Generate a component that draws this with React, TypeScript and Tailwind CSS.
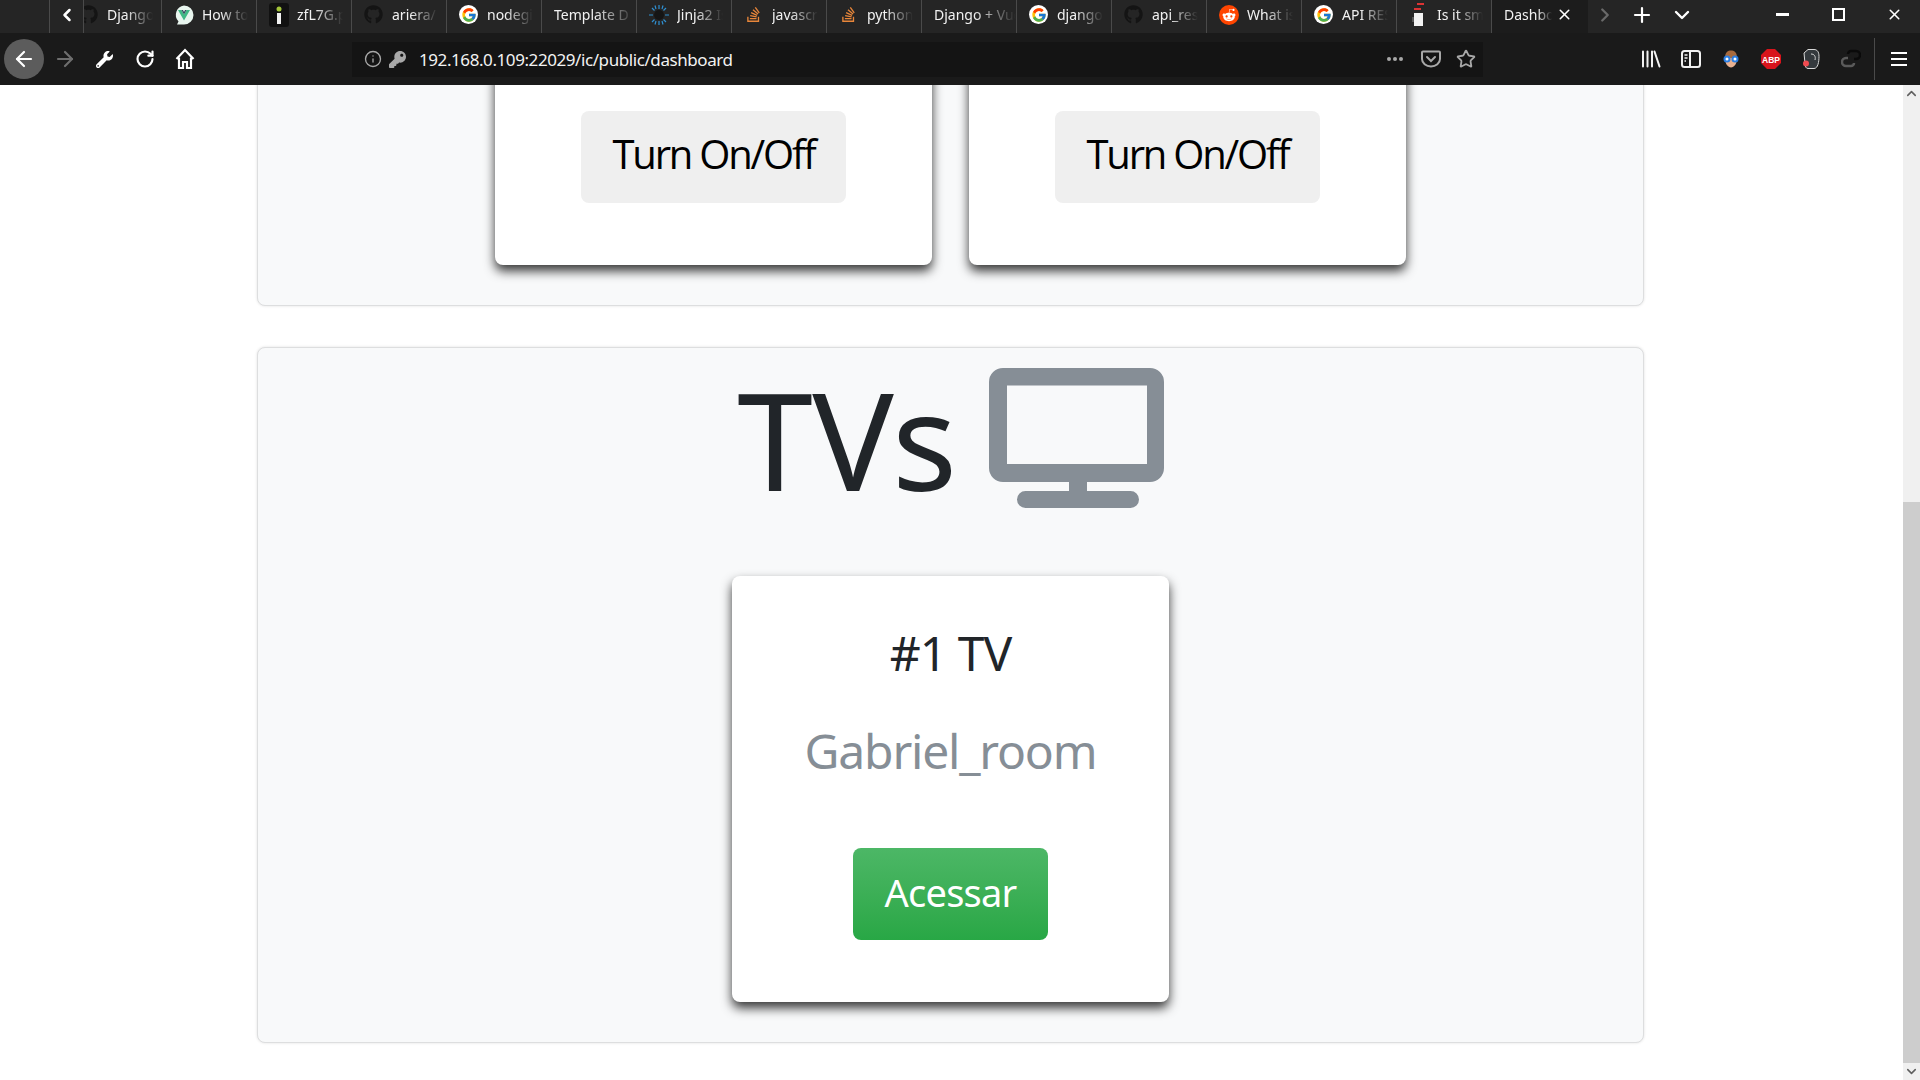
import { ArrowLeft, ArrowRight, ChevronDown, ChevronLeft, ChevronRight, ChevronUp, Info, Plus, RotateCw, Star, X } from 'lucide-react';
import { FaGithub, FaKey, FaRedditAlien, FaStackOverflow, FaWrench } from 'react-icons/fa';
import { FcGoogle } from 'react-icons/fc';

const GoogleIcon = () => (
  <span className="flex h-[19px] w-[19px] items-center justify-center rounded-full bg-white">
    <FcGoogle size={16} />
  </span>
);

const GithubIcon = () => <FaGithub size={19} className="text-[#141414]" />;

const StackIcon = () => <FaStackOverflow size={17} className="text-[#e8863a]" />;

const VueIcon = () => (
  <svg width="20" height="20" viewBox="0 0 20 20">
    <path d="M10 0.5a9.5 9.5 0 0 1 0 19H3l1.500-3A9.500 9.500 0 0 1 10 0.5z" fill="#e8f5ee" />
    <path d="M4 5h3.500L10 9.500 12.500 5H16l-6 10.500z" fill="#3fb984" />
    <path d="M7.500 5L10 9.500 12.500 5h-1.500L10 7 9 5z" fill="#34495e" />
  </svg>
);

const InfoFavicon = () => (
  <svg width="20" height="24" viewBox="0 0 20 24">
    <rect width="20" height="24" rx="3" fill="#111111" />
    <circle cx="10" cy="6" r="2.500" fill="#a4c639" />
    <rect x="8" y="10" width="4" height="11" fill="#f2f2f2" />
  </svg>
);

const JinjaIcon = () => (
  <svg width="22" height="22" viewBox="0 0 22 22">
    <g stroke="#2f8fd0" strokeWidth="1.200">
      <path d="M11 1v4M11 17v4M1 11h4M17 11h4M4 4l2.500 2.500M15.500 15.500L18 18M18 4l-2.500 2.500M6.500 15.500L4 18M7 1.500l1 3.500M15 1.500l-1 3.500M7 20.500l1-3.500M15 20.500l-1-3.500" />
    </g>
    <circle cx="11" cy="11" r="5" fill="#151515" />
  </svg>
);

const RedditIcon = () => (
  <span className="flex h-[20px] w-[20px] items-center justify-center rounded-full bg-[#ff4500]">
    <FaRedditAlien size={14} className="text-white" />
  </span>
);

const CoffeeIcon = () => (
  <svg width="14" height="24" viewBox="0 0 14 24">
    <rect x="5" y="0" width="7" height="2" fill="#d33" />
    <rect x="2" y="5" width="7" height="2" fill="#d33" />
    <rect x="2" y="10" width="9" height="13" fill="#f2f2f2" />
    <rect x="0" y="14" width="2" height="5" fill="#555" />
  </svg>
);

const tabs = [
  { label: 'Django', icon: <GithubIcon /> },
  { label: 'How to', icon: <VueIcon /> },
  { label: 'zfL7G.png', icon: <InfoFavicon /> },
  { label: 'ariera/', icon: <GithubIcon /> },
  { label: 'nodegit', icon: <GoogleIcon /> },
  { label: 'Template D', icon: null },
  { label: 'Jinja2 Is', icon: <JinjaIcon /> },
  { label: 'javascript', icon: <StackIcon /> },
  { label: 'python', icon: <StackIcon /> },
  { label: 'Django + Vue', icon: null },
  { label: 'django', icon: <GoogleIcon /> },
  { label: 'api_rest', icon: <GithubIcon /> },
  { label: 'What is', icon: <RedditIcon /> },
  { label: 'API REST', icon: <GoogleIcon /> },
  { label: 'Is it smart', icon: <CoffeeIcon /> },
];

const TabBar = () => (
  <div className="flex h-[33px] items-center bg-[#252525] font-['Noto_Sans',sans-serif] text-[14px] text-[#f2f2f2]">
    <div className="w-[49px] h-full" />
    <div className="relative z-10 flex h-full w-[35px] items-center justify-center border-x border-[#4a4a4a] bg-[#252525] pb-[4px]">
      <ChevronLeft size={20} strokeWidth={3} className="text-white" />
    </div>
    <div className="flex h-full -ml-[17px]">
      {tabs.map((tab) => (
        <div
          key={tab.label}
          className="flex h-full w-[95px] items-center overflow-hidden border-r border-[#4a4a4a] pb-[4px]"
        >
          {tab.icon ? (
            <>
              <span className="flex w-[40px] shrink-0 justify-center pl-[3px]">{tab.icon}</span>
              <span className="w-[46px] whitespace-nowrap overflow-hidden [mask-image:linear-gradient(to_right,black_40%,transparent)]">
                {tab.label}
              </span>
            </>
          ) : (
            <span className="pl-[12px] pr-[10px] whitespace-nowrap overflow-hidden [mask-image:linear-gradient(to_right,black_55%,transparent)]">
              {tab.label}
            </span>
          )}
        </div>
      ))}
      <div className="flex h-full w-[96px] items-center bg-[#1c1c1c] pl-[12px] pb-[4px]">
        <span className="w-[48px] whitespace-nowrap overflow-hidden [mask-image:linear-gradient(to_right,black_70%,transparent)]">
          Dashboard
        </span>
        <X size={17} strokeWidth={2.2} className="ml-[4px] text-white" />
      </div>
    </div>
    <div className="flex items-center pb-[4px]">
      <ChevronRight size={22} strokeWidth={2.5} className="ml-[6px] text-[#6a6a6a]" />
      <Plus size={24} strokeWidth={2.2} className="ml-[14px] text-white" />
      <ChevronDown size={24} strokeWidth={2.4} className="ml-[16px] text-white" />
    </div>
    <div className="ml-auto flex items-center pb-[4px]">
      <div className="h-[3px] w-[13px] bg-white" />
      <div className="ml-[43px] h-[13px] w-[13px] border-[2.5px] border-white" />
      <X size={17} strokeWidth={2.2} className="ml-[41px] mr-[17px] text-white" />
    </div>
  </div>
);

const PocketIcon = () => (
  <svg width="20" height="18" viewBox="0 0 20 18" fill="none" stroke="#a8a8a8" strokeWidth="2">
    <path d="M2 1.500h16a1 1 0 0 1 1 1V9a9 7.500 0 0 1-18 0V2.500a1 1 0 0 1 1-1z" />
    <path d="M6 7l4 4 4-4" strokeLinecap="round" />
  </svg>
);

const LibraryIcon = () => (
  <svg width="20" height="18" viewBox="0 0 20 18" stroke="#f2f2f2" strokeWidth="2" strokeLinecap="round">
    <path d="M2 1.500v15M6.500 1.500v15M11 1.500v15M13.500 1.500l5 15" />
  </svg>
);

const SidebarIcon = () => (
  <svg width="20" height="18" viewBox="0 0 20 18" fill="none" stroke="#f2f2f2" strokeWidth="2">
    <rect x="1" y="1" width="18" height="16" rx="2.500" />
    <path d="M9 1v16" />
    <path d="M3.500 5h3M3.500 8h3M3.500 11h1.500" strokeWidth="1.300" />
  </svg>
);

const MascotIcon = () => (
  <svg width="18" height="18" viewBox="0 0 18 18">
    <path d="M3 8C3 2 6 0.500 9 0.500S15 2 15 8z" fill="#a86a3d" />
    <path d="M3 8c0 6 3 9.500 6 9.500S15 14 15 8z" fill="#e8b090" />
    <circle cx="5" cy="9" r="3.500" fill="#2a7de1" />
    <circle cx="13" cy="9" r="3.500" fill="#2a7de1" />
    <circle cx="5" cy="9" r="1.500" fill="#ffffff" />
    <circle cx="13" cy="9" r="1.500" fill="#ffffff" />
  </svg>
);

const AbpIcon = () => (
  <svg width="20" height="20" viewBox="0 0 20 20">
    <path d="M6 0h8l6 6v8l-6 6H6l-6-6V6z" fill="#d8141c" />
    <text x="10" y="13.500" textAnchor="middle" fontSize="8.500" fontWeight="700" fill="#ffffff" fontFamily="Liberation Sans, sans-serif">
      ABP
    </text>
  </svg>
);

const EvernoteIcon = () => (
  <svg width="18" height="20" viewBox="0 0 18 20">
    <path d="M2 4l4-3.500h6c3 0 5 2 5 7s-1 12-5 12H6c-2 0-3-2-3-5z" fill="#34393d" stroke="#d8d8d8" strokeWidth="1" />
    <path d="M9 5c3 0 5 2 4 6" fill="none" stroke="#d8d8d8" strokeWidth="1" />
    <circle cx="4" cy="14.500" r="3" fill="#ef4b50" />
  </svg>
);

const SwirlIcon = () => (
  <svg width="20" height="20" viewBox="0 0 20 20" fill="none" strokeWidth="2.500">
    <path d="M7 6H5a4 4 0 0 0 0 8h5a3 3 0 0 0 3-3" stroke="#5a5a5a" transform="translate(0 3)" />
    <path d="M7 9a3 3 0 0 1 3-3h5a4 4 0 0 1 0 8h-2" stroke="#0a0a0a" transform="translate(0 -4)" />
  </svg>
);

const NavBar = () => (
  <div className="flex h-[52px] items-center bg-[#1a1a1a]">
    <div className="ml-[4px] flex h-[40px] w-[40px] items-center justify-center rounded-full bg-[#5c5c5c]">
      <ArrowLeft size={24} strokeWidth={2.2} className="text-white" />
    </div>
    <ArrowRight size={24} strokeWidth={2.2} className="ml-[9px] text-[#6e6e6e]" />
    <FaWrench size={17} className="ml-[19px] text-white" />
    <RotateCw size={20} strokeWidth={2.6} className="ml-[22px] text-white" />
    <svg width="20" height="22" viewBox="0 0 20 22" fill="none" stroke="#ffffff" strokeWidth="2.200" className="ml-[20px]">
      <path d="M1.500 11L10 2l8.500 9" />
      <path d="M4 9.500V20h4v-6h4v6h4V9.500" />
    </svg>
    <div className="ml-[157px] flex h-[35px] w-[1131px] items-center bg-[#141414] font-['Noto_Sans',sans-serif] text-[17px] text-[#f2f2f2]">
      <Info size={18} strokeWidth={1.8} className="ml-[12px] text-[#a8a8a8]" />
      <FaKey size={17} className="ml-[7px] text-[#a8a8a8]" />
      <span className="ml-[13px] pt-[2px] tracking-[-0.42px]">192.168.0.109:22029/ic/public/dashboard</span>
      <div className="ml-auto flex items-center text-[#a8a8a8]">
        <div className="flex gap-[2px]">
          <span className="h-[4px] w-[4px] rounded-full bg-[#a8a8a8]" />
          <span className="h-[4px] w-[4px] rounded-full bg-[#a8a8a8]" />
          <span className="h-[4px] w-[4px] rounded-full bg-[#a8a8a8]" />
        </div>
        <span className="ml-[18px] flex">
          <PocketIcon />
        </span>
        <Star size={20} strokeWidth={2.2} className="ml-[15px] mr-[7px]" />
      </div>
    </div>
    <div className="ml-[158px] flex items-center gap-[20px]">
      <LibraryIcon />
      <SidebarIcon />
      <span className="mx-[1px] flex"><MascotIcon /></span>
      <AbpIcon />
      <span className="mx-[1px] flex"><EvernoteIcon /></span>
      <SwirlIcon />
    </div>
    <div className="ml-[13px] h-[42px] w-px bg-[#4a4a4a]" />
    <div className="ml-[16px] flex w-[16px] flex-col gap-[4px]">
      <span className="h-[2px] bg-white" />
      <span className="h-[2px] bg-white" />
      <span className="h-[2px] bg-white" />
    </div>
  </div>
);

const Scrollbar = () => (
  <div className="flex h-full w-[17px] shrink-0 flex-col items-center bg-[#f0f0f0]">
    <div className="flex h-[17px] items-center justify-center">
      <ChevronUp size={15} strokeWidth={2.5} className="text-[#606060]" />
    </div>
    <div className="h-[400px]" />
    <div className="w-full flex-1 bg-[#cdcdcd]" />
    <div className="flex h-[17px] items-center justify-center">
      <ChevronDown size={15} strokeWidth={2.5} className="text-[#606060]" />
    </div>
  </div>
);

const cardClass =
  'rounded-[8px] bg-white shadow-[0_6px_11px_rgba(0,0,0,0.78)] text-center';

const panelClass =
  'rounded-[8px] border border-[#dddedf] bg-[#f8f9fa] shadow-[0_0_3px_rgba(0,0,0,0.12)]';

const SwitchCard = () => (
  <div className={`${cardClass} w-[437px] pt-[51px] pb-[62px]`}>
    <button className="h-[92px] w-[265px] rounded-[8px] bg-[#efefef] pb-[6px] font-['Open_Sans',sans-serif] text-[40px] tracking-[-2.2px] text-black">
      Turn On/Off
    </button>
  </div>
);

const Dashboard = () => (
  <div className="flex-1 overflow-hidden bg-white font-['Noto_Sans',sans-serif]">
    <div className="ml-[257px] -mt-[26px] w-[1387px]">
      <section className={`${panelClass} flex justify-center gap-[37px] pb-[40px]`}>
        <SwitchCard />
        <SwitchCard />
      </section>
      <section className={`${panelClass} mt-[41px] flex h-[696px] flex-col items-center`}>
        <div className="mt-[20px] flex h-[140px] items-start">
          <h1 className="mt-[-14px] text-[136px] leading-[1.25] font-normal tracking-[-0.5px] text-[#212529]">
            TVs
          </h1>
          <svg width="175" height="140" viewBox="0 0 175 140" className="ml-[32px] text-[#868e96]" fill="currentColor">
            <path
              fillRule="evenodd"
              d="M14 0h147a14 14 0 0 1 14 14v86a14 14 0 0 1-14 14H98v9h43.500a8.500 8.500 0 0 1 0 17H36.500a8.500 8.500 0 0 1 0-17H80v-9H14a14 14 0 0 1-14-14V14A14 14 0 0 1 14 0zm4 17.500V96h140V17.500z"
            />
          </svg>
        </div>
        <div className={`${cardClass} mt-[68px] flex w-[437px] flex-col items-center pt-[47px]`}>
          <h2 className="text-[48px] leading-[60px] font-normal tracking-[-1px] text-[#212529]">#1 TV</h2>
          <p className="mt-[38px] text-[48px] leading-[60px] tracking-[-1.2px] text-[#868e96]">Gabriel_room</p>
          <button className="mt-[67px] mb-[62px] h-[92px] w-[195px] rounded-[8px] bg-gradient-to-b from-[#4cb766] to-[#28a745] pb-[4px] text-[38px] tracking-[-0.8px] text-white">
            Acessar
          </button>
        </div>
      </section>
    </div>
  </div>
);

export default function App() {
  return (
    <div className="flex h-[1080px] w-[1920px] flex-col overflow-hidden">
      <TabBar />
      <NavBar />
      <div className="flex min-h-0 flex-1">
        <Dashboard />
        <Scrollbar />
      </div>
    </div>
  );
}
